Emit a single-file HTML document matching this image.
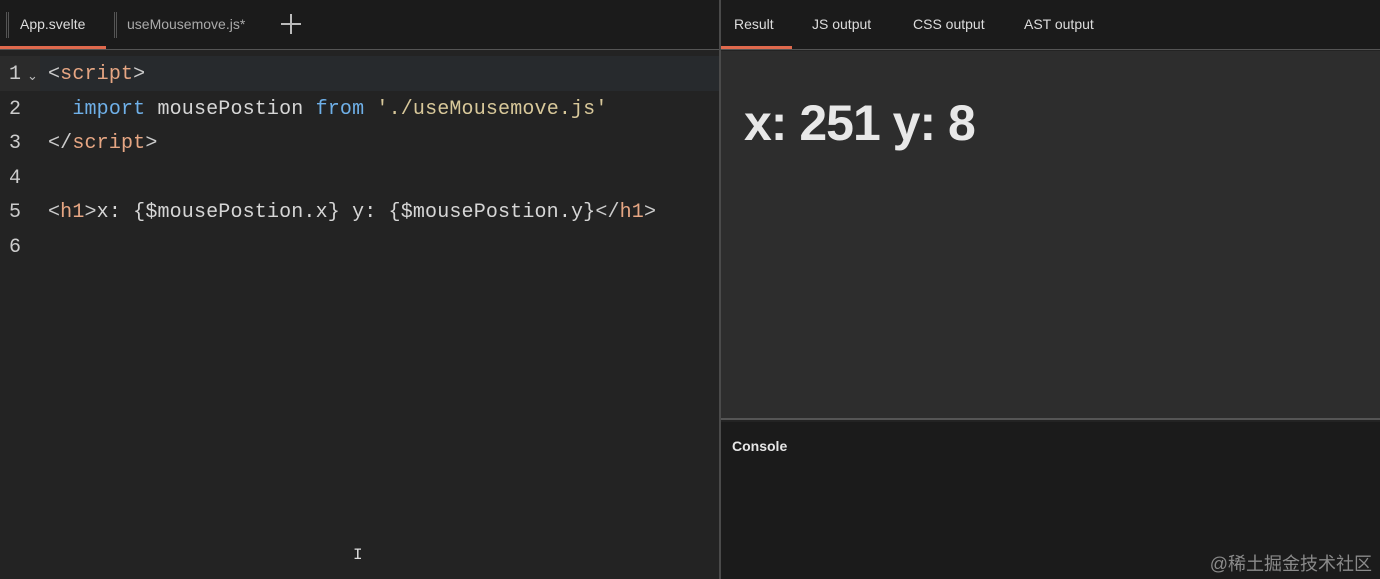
<!DOCTYPE html>
<html><head><meta charset="utf-8"><style>
*{margin:0;padding:0;box-sizing:border-box}
body{width:1380px;height:579px;overflow:hidden;background:#232323;font-family:"Liberation Sans",sans-serif;position:relative}
.tabs{position:absolute;left:0;top:0;width:719px;height:50px;background:#1b1b1b;border-bottom:1px solid #555}
.rtabs{position:absolute;left:721px;top:0;width:659px;height:50px;background:#1b1b1b;border-bottom:1px solid #555}
.t{position:absolute;top:16px;font-size:14px;color:#ddd}
.ul{position:absolute;top:46px;height:3px;background:#e0694d}
.grip{position:absolute;top:12px;width:3px;height:26px;border-left:1px solid #555;border-right:1px solid #555}
.vdiv{position:absolute;left:719px;top:0;width:2px;height:579px;background:#4a4a4a}
.ed{position:absolute;left:0;top:51px;width:719px;height:528px;background:#232323}
.hl{position:absolute;left:40px;top:56px;width:679px;height:35px;background:#272a2d}
.gut{position:absolute;left:0;top:56px;width:40px;height:35px;background:#2b2b2b}
.code{position:absolute;left:0;top:58px;font-family:"Liberation Mono",monospace;font-size:20px;line-height:34.5px;color:#d6d6d6;white-space:pre;letter-spacing:0.16px}
.ln{position:absolute;left:9px;top:58px;font-family:"Liberation Mono",monospace;font-size:20px;line-height:34.5px;color:#ccc;white-space:pre}
.tg{color:#e6a683}.kw{color:#6fb0e8}.st{color:#d8c89a}.pu{color:#ccc}
.res{position:absolute;left:721px;top:51px;width:659px;height:369px;background:#2d2d2d;border-bottom:2px solid #555}
.con{position:absolute;left:721px;top:422px;width:659px;height:157px;background:#1b1b1b}
</style></head><body>
<div class="tabs">
<div class="grip" style="left:6px"></div>
<div class="t" style="left:20px">App.svelte</div>
<div class="grip" style="left:114px"></div>
<div class="t" style="left:127px;color:#aaa">useMousemove.js*</div>
<div style="position:absolute;left:281px;top:23px;width:20px;height:2px;background:#bbb"></div>
<div style="position:absolute;left:290px;top:14px;width:2px;height:20px;background:#bbb"></div>
<div class="ul" style="left:0;width:106px"></div>
</div>
<div class="rtabs">
<div class="t" style="left:13px">Result</div>
<div class="t" style="left:91px">JS output</div>
<div class="t" style="left:192px">CSS output</div>
<div class="t" style="left:303px">AST output</div>
<div class="ul" style="left:0;width:71px"></div>
</div>
<div class="vdiv"></div>
<div class="ed"></div>
<div class="hl"></div><div class="gut"></div>
<div class="ln">1
2
3
4
5
6</div>
<div style="position:absolute;left:27px;top:68px;color:#bbb;font-size:13px">⌄</div>
<div class="code" style="left:48px"><span class="pu">&lt;</span><span class="tg">script</span><span class="pu">&gt;</span>
  <span class="kw">import</span> mousePostion <span class="kw">from</span> <span class="st">'./useMousemove.js'</span>
<span class="pu">&lt;/</span><span class="tg">script</span><span class="pu">&gt;</span>

<span class="pu">&lt;</span><span class="tg">h1</span><span class="pu">&gt;</span>x: {$mousePostion.x} y: {$mousePostion.y}<span class="pu">&lt;/</span><span class="tg">h1</span><span class="pu">&gt;</span>
</div>
<div class="res"><div style="position:absolute;left:23px;top:43px;font-size:50px;font-weight:bold;color:#e8e8e8;letter-spacing:-1px">x: 251 y: 8</div></div>
<div class="con"><div style="position:absolute;left:11px;top:16px;font-size:14px;font-weight:bold;color:#e6e6e6">Console</div>
<div style="position:absolute;right:8px;top:128px;font-size:18px;color:#8a8a8a;font-family:'Liberation Sans','Noto Sans CJK SC',sans-serif">@稀土掘金技术社区</div></div>
<div style="position:absolute;left:353px;top:546px;color:#ddd;font-size:16px;font-family:'Liberation Mono',monospace">I</div>
</body></html>
